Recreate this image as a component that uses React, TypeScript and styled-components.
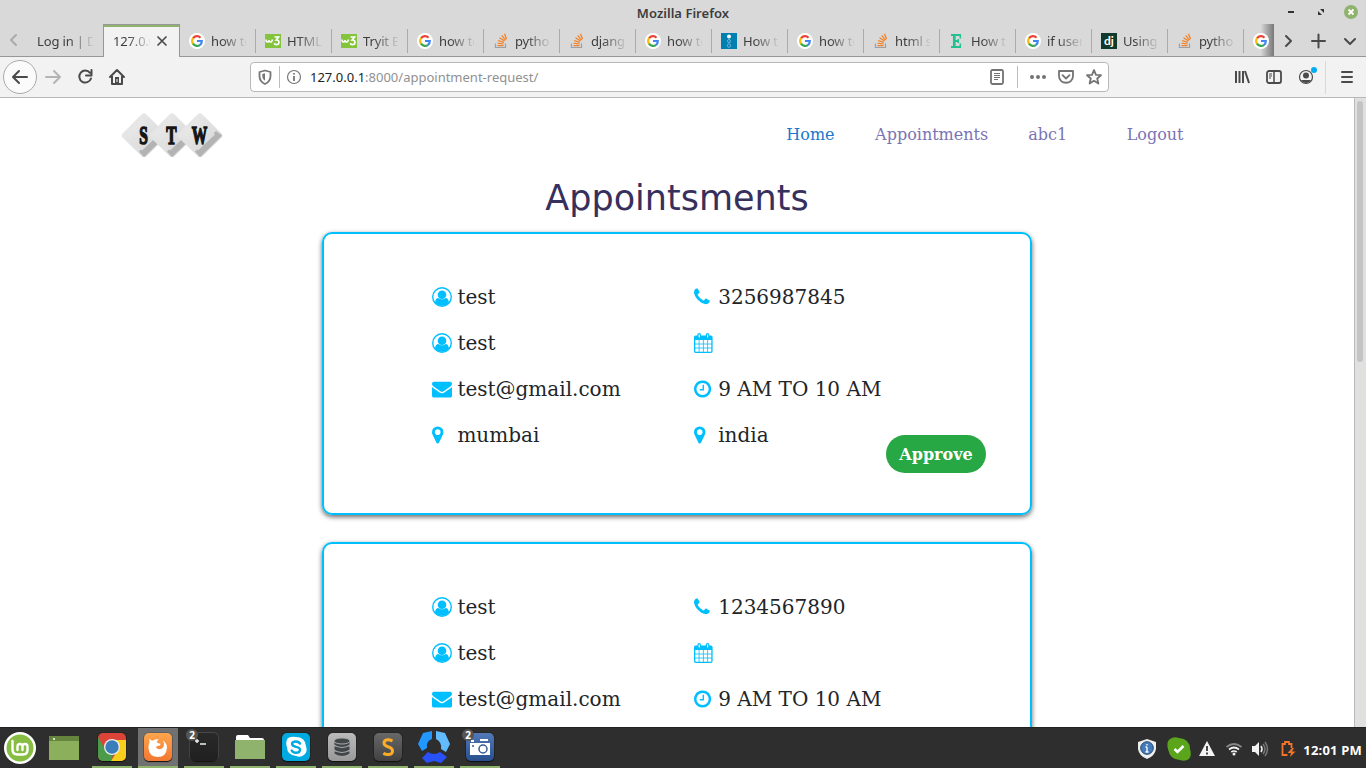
import React from "react";
import styled, { createGlobalStyle } from "styled-components";

const Global = createGlobalStyle`
  * { box-sizing: border-box; }
  body { margin: 0; background: #fff; overflow: hidden; }
  svg { display: block; flex: none; overflow: visible; }
`;
const Screen = styled.div`
  width: 1366px; height: 768px; display: flex; flex-direction: column; overflow: hidden;
  font-family: "Noto Sans", "Open Sans", sans-serif; font-size: 13px; color: #3d3d3d;
`;
const TitleBar = styled.header`
  height: 24px; flex: none; background: #d9d9d9; display: grid; grid-template-columns: 1fr auto 1fr; align-items: center;
  padding: 2px 8px 0 8px;
`;
const WindowTitle = styled.div`
  font-weight: 600; font-size: 13px; letter-spacing: 0.03px; line-height: 22px;
`;
const WindowButtons = styled.div`
  display: flex; justify-content: flex-end; align-items: center; height: 20px;
`;
const TabStrip = styled.nav`
  height: 33px; flex: none; display: flex; background: #d9d9d9; box-shadow: inset 0 -1px #979797;
`;
const ScrollTabs = styled.div`
  width: 27px; padding: 8px 0 0 6px; flex: none;
`;
const Tab = styled.div<{ $width?: number; $active?: boolean; $plain?: boolean }>`
  width: ${p => p.$width ?? 76}px; height: 33px; flex: none; display: flex; align-items: center; overflow: hidden;
  padding: ${p => (p.$plain ? "1px 8px 0 10px" : p.$active ? "0 9px" : "1px 7px 0 9px")};
  gap: ${p => (p.$active ? 4 : 6)}px;
  ${p => p.$active && "background:#f2f2f2; border:1px solid #979797; border-bottom:0; box-shadow: inset 0 2px #8fb26c;"}
`;
const TabRule = styled.i`
  width: 1px; height: 24px; flex: none; background: #aaa; margin: 5px 0 0 -1px;
`;
const TabText = styled.span<{ $width: number }>`
  width: ${p => p.$width}px; overflow: hidden; white-space: nowrap; letter-spacing: -0.15px; line-height: 20px;
  mask-image: linear-gradient(to right, #000 ${p => p.$width - 24}px, transparent ${p => p.$width + 2}px);
`;
const LastTab = styled.div`
  width: 30px; height: 32px; padding: 9px 0 0 9px; flex: none; overflow: hidden;
  background: linear-gradient(to right, transparent 55%, #777);
`;
const TabTools = styled.div`
  display: flex; flex: 1; padding: 5px 8px 0 6px; justify-content: space-between; height: 28px; align-items: center;
`;
const Toolbar = styled.div`
  height: 41px; flex: none; display: flex; align-items: center; background: #f2f2f2; border-bottom: 1px solid #b8b8b8; padding: 0 11px 0 3px;
`;
const BackButton = styled.div`
  width: 34px; height: 34px; border: 1px solid #aaa; border-radius: 50%; background: #fbfbfb; display: grid; place-items: center;
`;
const NavIcons = styled.div`
  display: flex; gap: 16px; margin-left: 8px; width: 205px;
`;
const AddressBar = styled.div`
  width: 859px; height: 30px; border: 1px solid #b8b8b8; border-radius: 4px; background: #fff; display: flex; align-items: center; padding: 0 6px;
`;
const Rule = styled.i<{ $h?: number; $gap?: number; $soft?: boolean }>`
  width: 1px; height: ${p => p.$h ?? 22}px; margin-left: ${p => p.$gap ?? 0}px; background: ${p => (p.$soft ? "#d8d8d8" : "#bdbdbd")}; flex: none;
`;
const Url = styled.div`
  flex: 1; margin-left: 8px; letter-spacing: 0; color: #919191; line-height: 20px; white-space: nowrap;
  b { font-weight: 400; color: #222; }
`;
const AddressActions = styled.div`
  display: flex; align-items: center; gap: 12px;
`;
const RightTools = styled.div`
  flex: 1; display: flex; align-items: center; justify-content: flex-end; gap: 16px;
`;
const MenuGroup = styled.div`
  display: flex; align-items: center; gap: 13px; margin-left: -5px;
`;
const Viewport = styled.div`
  flex: 1; min-height: 0; display: flex; background: #fff;
`;
const Page = styled.main`
  width: 1354px; height: 629px; overflow: hidden; font-family: "DejaVu Serif", serif; color: #212529;
`;
const ScrollTrack = styled.div`
  width: 12px; border-left: 1px solid #b9b9b9; background: #e0e0de; padding: 3px 2px;
`;
const ScrollThumb = styled.div`
  width: 6px; height: 261px; border-radius: 3px; background: #c3c5c4;
`;
const SiteHeader = styled.header`
  height: 73px; padding: 15px 170.5px 0 122px; display: flex; justify-content: space-between;
`;
const SiteNav = styled.nav`
  display: flex; font-size: 16px; line-height: 24px; padding-top: 10px; color: #7a74b4;
`;
const NavLink = styled.span<{ $current?: boolean; $gap?: number }>`
  margin-left: ${p => p.$gap ?? 40}px; ${p => p.$current && "color:#1977cc;"}
`;
const Heading = styled.h1`
  margin: 0; height: 61px; padding-top: 6px; font: 400 35px/43px "DejaVu Sans", sans-serif; text-align: center; color: #37305c;
`;
const Card = styled.section`
  width: 710px; height: 283px; margin: 0 auto 27px; border: 2px solid #00bfff; border-radius: 10px; box-shadow: 0 2px 5px rgba(0,0,0,.6);
  padding: 40px 43px 39px 108px; display: grid; grid-template-columns: 262px 192px 101px;
`;
const Column = styled.div`
  display: flex; flex-direction: column;
`;
const Detail = styled.div`
  height: 46px; display: flex; align-items: center; font-size: 20px; white-space: nowrap;
`;
const IconSlot = styled.span<{ $width: number }>`
  width: ${p => p.$width}px; flex: none; color: #00bfff;
`;
const Approve = styled.button`
  align-self: end; height: 38px; width: 100px; margin: 0 0 1px 0; padding: 1px 0 0; border: 0; border-radius: 19px; background: #28a745; color: #fff;
  font: 700 16px/24px "DejaVu Serif", serif;
`;
const Taskbar = styled.footer`
  height: 41px; flex: none; background: #2e2e2e; border-top: 1px solid #222; display: flex;
`;
const Launcher = styled.div<{ $open?: boolean; $active?: boolean; $width?: number; $gap?: number }>`
  width: ${p => p.$width ?? 40}px; height: 40px; margin-right: ${p => p.$gap ?? 6}px; flex: none; display: grid; place-items: center; position: relative;
  ${p => p.$active && "background:#717171;"}
  ${p => p.$open && "border-bottom:2px solid #8fb26c;"}
`;
const AppTile = styled.div<{ $bg: string; $edge?: string }>`
  width: 28px; height: 28px; border-radius: 5px; background: ${p => p.$bg}; overflow: hidden; box-shadow: 0 1px 1px #111, 0 0 0 1px ${p => p.$edge ?? "#0002"};
`;
const Count = styled.b`
  position: absolute; left: 2px; top: 1px; width: 12px; height: 12px; border-radius: 50%; background: #555; color: #fff; font-size: 10px; line-height: 12px; text-align: center;
`;
const Tray = styled.div`
  margin-left: auto; display: flex; align-items: center; padding: 1px 4px 0 0;
`;
const TrayItem = styled.div<{ $gap: number }>`
  margin-right: ${p => p.$gap}px;
`;
const Clock = styled.time`
  color: #fff; font-size: 13px; font-weight: 700; letter-spacing: .2px; white-space: nowrap; padding-top: 2px;
`;

type StrokeProps = { d: string; w?: number; c?: string; s?: number };
const Stroke = ({ d, w = 2, c = "#4a4a4a", s = 16 }: StrokeProps) => (
  <svg width={s} height={s} viewBox="0 0 16 16" fill="none" stroke={c} strokeWidth={w} strokeLinecap="round" strokeLinejoin="round"><path d={d} /></svg>
);

const Google = () => (
  <svg width="16" height="16" viewBox="0 0 16 16"><circle cx="8" cy="8" r="8" fill="#fff" />
    <g fill="none" strokeWidth="2.2"><path d="M4 5.3A4.8 4.8 0 0 1 11.5 4.7" stroke="#ea4335" /><path d="M4.1 5.2a4.8 4.8 0 0 0 0 5.6" stroke="#fbbc05" /><path d="M4 10.7a4.8 4.8 0 0 0 7.1 1.1" stroke="#34a853" /><path d="M8 8h4.8a4.8 4.8 0 0 1-1.8 3.9" stroke="#4285f4" /></g></svg>
);
const Overflow = () => (
  <svg width="16" height="16" viewBox="0 0 16 16" fill="none"><path d="M2.5 10.5v4h10v-4" stroke="#9aa0a8" strokeWidth="1.2" /><path d="M4.5 12.5h6M4.6 10.2l6 .8M5.1 7.5l5.8 1.9M6.5 4.7l5.1 3.4M8.7 2.4l3.9 4.7M11.5.7l2.1 5.5" stroke="#f48024" strokeWidth="1.25" /></svg>
);
const W3 = () => (
  <svg width="16" height="14" viewBox="0 0 16 14"><path fill="#84c43c" d="M0 0h16v14H0z" /><path d="M1 5.5q0 2.500 1.500 2.500T4 6q0 2 1.500 2T7.500 5.500" fill="none" stroke="#fff" strokeWidth="1.500" /><path d="M9.500 3h4L11.200 6c3.800-.3 3.500 4.700.1 4.700-1.100 0-1.800-.5-2-1.500" fill="none" stroke="#fff" strokeWidth="1.700" /></svg>
);
const Ocean = () => (
  <svg width="16" height="16"><path fill="#007fb1" d="M0 0h16v16H0z" /><circle cx="8" cy="3.5" r="2" fill="#fff" /><g fill="none" stroke="#6fb5d2"><circle cx="8" cy="8" r="1.5" /><circle cx="8" cy="12.5" r="1.7" /></g></svg>
);
const LetterE = () => (
  <svg width="16" height="16" viewBox="0 0 16 16" fill="none" stroke="#23c092"><path d="M2 2h10M2 14h10M5 8h4.500" strokeWidth="2" /><path d="M5.300 2v12" strokeWidth="2.700" /><path d="M11.300 2v3.500M11.300 14v-3.500M9.300 6v4" strokeWidth="1.500" /></svg>
);
const Django = () => <svg width="16" height="16"><path fill="#103a2c" d="M0 0h16v16H0z" /><text x="3" y="12" fontFamily="Lato" fontWeight="700" fontSize="12" fill="#fff">dj</text></svg>;

const tabs: [React.FC, string][] = [[Google, "how to"], [W3, "HTML s"], [W3, "Tryit E"], [Google, "how to"], [Overflow, "python"], [Overflow, "django"], [Google, "how to"], [Ocean, "How to"], [Google, "how to"], [Overflow, "html se"], [LetterE, "How to"], [Google, "if user"], [Django, "Using"], [Overflow, "python"]];

const Logo = () => (
  <svg width="102" height="46" viewBox="0 0 102 46">
    <defs><linearGradient id="face" x2="1" y2="1"><stop stopColor="#c4c4c4" /><stop offset=".25" stopColor="#e6e6e6" /><stop offset=".7" stopColor="#ddd" /><stop offset="1" stopColor="#a5a5a5" /></linearGradient>
      <linearGradient id="top" x2="1" y2="1"><stop stopColor="#ededed" /><stop offset="1" stopColor="#d6d6d6" /></linearGradient></defs>
    {[[22, "S"], [50, "T"], [78, "W"]].map(([x, l]) => (
      <g key={l} transform={`translate(${x} 22.5)`}>
        <path d="M-2-21.500Q0-23 2-21.500L21.500-2Q23 0 21.500 2L2 21Q0 22-2 21L-21.500 2Q-23 0-21.500-2z" fill="url(#face)" />
        <path d="M0 21.500-5 16 16-4.500 22 0z" fill="#b3b3b3" /><path d="M-2-17 15-1-2 15-17-1z" fill="url(#top)" />
        <text transform="translate(-.5 8) scale(.62 1)" textAnchor="middle" fontFamily="Liberation Serif" fontWeight="700" fontSize="25" fill="#151515" stroke="#151515" strokeWidth="1.5">{l}</text>
      </g>
    ))}
  </svg>
);

const glyphs: Record<string, string> = {
  phone: "M1600 1240q0 27-10 70.5t-21 68.5q-21 50-122 106-94 51-186 51-27 0-53-3.5t-57.5-12.5-47-14.5-55.5-20.5-49-18q-98-35-175-83-127-79-264-216t-216-264q-48-77-83-175-3-9-18-49t-20.5-55.5-14.5-47-12.5-57.5-3.5-53q0-92 51-186 56-101 106-122 25-11 68.5-21t70.5-10q14 0 21 3 18 6 53 76 11 19 30 54t35 63.5 31 53.5q3 4 17.5 25t21.5 35.5 7 28.5q0 20-28.5 50t-62 55-62 53-28.5 46q0 9 5 22.5t8.5 20.5 14 24 11.5 19q76 137 174 235t235 174q2 1 19 11.5t24 14 20.5 8.5 22.5 5q18 0 46-28.5t53-62 55-62 50-28.5q14 0 28.5 7t35.5 21.5 25 17.5q25 15 53.5 31t63.5 35 54 30q70 35 76 53 3 7 3 21z",
  mail: "M1792 710v794q0 66-47 113t-113 47h-1472q-66 0-113-47t-47-113v-794q44 49 101 87 362 246 497 345 57 42 92.5 65.5t94.5 48 110 24.5h2q51 0 110-24.5t94.5-48 92.5-65.5q170-123 498-345 57-39 100-87zm0-294q0 79-49 151t-122 123q-376 261-468 325-10 7-42.5 31t-54 38.5-52 32.5-57.5 27-50 9h-2q-23 0-50-9t-57.5-27-52-32.5-54-38.5-42.5-31q-91-64-262-182.5t-205-142.5q-62-42-117-115.5t-55-136.5q0-78 41.5-130t118.5-52h1472q65 0 112.5 47t47.5 113z",
  pin: "M1152 640q0-106-75-181t-181-75-181 75-75 181 75 181 181 75 181-75 75-181zm256 0q0 109-33 179l-364 774q-16 33-47.5 52t-67.5 19-67.5-19-46.5-52l-365-774q-33-70-33-179 0-212 150-362t362-150 362 150 150 362z",
  clock: "M1024 544v448q0 14-9 23t-23 9h-320q-14 0-23-9t-9-23v-64q0-14 9-23t23-9h224v-352q0-14 9-23t23-9h64q14 0 23 9t9 23zm416 352q0-148-73-273t-198-198-273-73-273 73-198 198-73 273 73 273 198 198 273 73 273-73 198-198 73-273zm224 0q0 209-103 385.5t-279.5 279.5-385.5 103-385.5-103-279.5-279.5-103-385.5 103-385.5 279.5-279.5 385.5-103 385.5 103 279.5 279.5 103 385.5z",
};
const originX: Record<string, number> = { phone: 192, mail: 0, pin: 384, clock: 128 };
const Glyph = ({ name }: { name: string }) => {
  if (name === "user") return (
    <svg width="20" height="20" viewBox="0 0 20 20"><circle cx="10" cy="10" r="9.3" fill="none" stroke="currentColor" strokeWidth="1.4" /><circle cx="10" cy="7.7" r="4.3" fill="currentColor" /><path d="M3 15.4c.3-2.7 1.4-4.5 3.4-4.5 2 1.8 5.2 1.8 7.2 0 2 0 3.1 1.8 3.4 4.5C13.5 19.8 6.5 19.8 3 15.4z" fill="currentColor" /></svg>
  );
  if (name === "calendar") return (
    <svg width="19" height="20" viewBox="0 0 19 20" fill="none" stroke="currentColor"><rect x=".65" y="3.2" width="17.3" height="16.1" rx="1" strokeWidth="1.3" /><path d="M1 3h17v4H1z" fill="currentColor" stroke="none" /><path d="M1 11h17M1 15h17M5.1 7v12M9.4 7v12M13.6 7v12" strokeWidth=".8" /><rect x="4" y=".6" width="2.4" height="4.4" rx="1.1" fill="#fff" strokeWidth="1.2" /><rect x="12.4" y=".6" width="2.4" height="4.4" rx="1.1" fill="#fff" strokeWidth="1.2" /></svg>
  );
  return <svg width="20" height="20" viewBox={`${originX[name]} 0 1792 1792`} fill="currentColor"><path d={glyphs[name]} /></svg>;
};

const Appointment = ({ phone, city, country }: { phone: string; city?: string; country?: string }) => {
  const person = [["user", "test"], ["user", "test"], ["mail", "test@gmail.com"]];
  const booking = [["phone", phone], ["calendar", ""], ["clock", "9 AM TO 10 AM"]];
  if (city) person.push(["pin", city]);
  if (country) booking.push(["pin", country]);
  return (
    <Card>
      <Column>{person.map(([icon, text], i) => <Detail key={i}><IconSlot $width={25.4}><Glyph name={icon} /></IconSlot>{text}</Detail>)}</Column>
      <Column>{booking.map(([icon, text]) => <Detail key={icon}><IconSlot $width={24.2}><Glyph name={icon} /></IconSlot>{text}</Detail>)}</Column>
      {city && <Approve>Approve</Approve>}
    </Card>
  );
};

const BrowserTabs = () => (
  <TabStrip>
    <ScrollTabs><Stroke d="M10 3 5 8l5 5" c="#aaa" /></ScrollTabs>
    <Tab $plain><TabText $width={56}>Log in | Dj</TabText></Tab>
    <Tab $active $width={77}><TabText $width={38}>127.0.0</TabText><Stroke d="m4 4 8 8m0-8-8 8" w={1.7} /></Tab>
    {tabs.map(([Icon, label], i) => (
      <React.Fragment key={i}><Tab><Icon /><TabText $width={35}>{label}</TabText></Tab><TabRule /></React.Fragment>
    ))}
    <LastTab><Google /></LastTab>
    <TabTools><Stroke d="m6 3 5 5-5 5" /><Stroke d="M7.500 1.500v13M1 8h13" /><Stroke d="m3 6 5 5 5-5" /></TabTools>
  </TabStrip>
);

const BrowserToolbar = () => (
  <Toolbar>
    <BackButton><Stroke d="M15 8H1m6-6L1 8l6 6" /></BackButton>
    <NavIcons>
      <Stroke d="M1 8h14M9 2l6 6-6 6" c="#b4b4b4" />
      <Stroke d="M13 3.8A6 6 0 1 0 14 9.5M14.5 1v5.5H9" />
      <svg width="16" height="16" viewBox="0 0 16 16"><path d="m1 8 7-7 7 7M3 7v8h10V7" fill="none" stroke="#4a4a4a" strokeWidth="2" strokeLinecap="round" strokeLinejoin="round" /><path d="M6 8h4v7H6z" fill="#4a4a4a" /><path d="M8 10v3" stroke="#fff" /></svg>
    </NavIcons>
    <AddressBar>
      <svg width="16" height="16" viewBox="0 0 16 16"><path d="M8 1.5 13.5 3v4c0 4-2 6.5-5.500 8-3.500-1.500-5.500-4-5.500-8V3z" fill="none" stroke="#777" strokeWidth="1.8" strokeLinejoin="round" /><path d="M8 4.300v7.500c-1.800-1.200-2.700-2.800-2.700-5V5z" fill="#777" /></svg>
      <Rule $gap={6} />
      <svg width="22" height="16" viewBox="-7 0 22 16"><circle cx="7" cy="8" r="6.500" fill="none" stroke="#777" strokeWidth="1.200" /><path d="M7 7v5M7 4v1.500" stroke="#777" strokeWidth="1.800" /></svg>
      <Url><b>127.0.0.1</b>:8000/appointment-request/</Url>
      <AddressActions>
        <svg width="16" height="16" viewBox="0 0 16 16" fill="none" stroke="#737373"><rect x="2" y="1" width="12" height="14" rx="1.500" strokeWidth="1.800" /><path d="M5 4.500h6M5 6.500h6M5 8.500h6M5 10.500h4" /></svg>
        <Rule />
        <svg width="16" height="16" viewBox="0 0 16 16" fill="#737373"><circle cx="2" cy="8" r="2" /><circle cx="8" cy="8" r="2" /><circle cx="14" cy="8" r="2" /></svg>
        <Stroke d="M1 2h14v5c0 9-14 9-14 0zM4.500 6.200 8 9.500l3.500-3.300" c="#737373" w={1.8} />
        <Stroke d="m8 1 2 4.800 5 .4-3.800 3.300 1.200 5L8 11.800l-4.400 2.700 1.200-5L1 6.200l5-.4z" c="#737373" w={1.8} />
      </AddressActions>
    </AddressBar>
    <RightTools>
      <svg width="16" height="16" viewBox="0 0 16 16"><path d="M2 2v12M5.500 2v12M9 2v12M11 2l4 12" stroke="#4a4a4a" strokeWidth="2" /></svg>
      <svg width="16" height="16" viewBox="0 0 16 16" fill="none" stroke="#4a4a4a"><rect x="1" y="2" width="14" height="12" rx="2" strokeWidth="1.800" /><path d="M8 2v12" strokeWidth="1.500" /><path d="M3 5h3M3 7h3M3 9h2" /></svg>
      <svg width="16" height="16" viewBox="0 0 16 16"><circle cx="8" cy="8" r="6.500" fill="none" stroke="#4a4a4a" strokeWidth="1.200" /><circle cx="8" cy="6.500" r="3" fill="#4a4a4a" /><path d="M3 11h10c-2 4-8 4-10 0z" fill="#4a4a4a" /><circle cx="16" cy="1" r="3" fill="#00adf5" /></svg>
      <MenuGroup><Rule $h={33} $soft /><Stroke d="M3 3h10M3 8h10M3 13h10" /></MenuGroup>
    </RightTools>
  </Toolbar>
);

const DesktopBar = () => (
  <Taskbar>
    <Launcher $gap={4}><svg width="32" height="32" viewBox="0 0 32 32"><circle cx="16" cy="16" r="16" fill="#fff" /><circle cx="16" cy="16" r="13.500" fill="#87bd43" /><path d="M8.500 9v8.500q0 5 5 5H19q4.500 0 4.500-4.500v-3.500Q23.500 12 21 12t-2.500 2.500V18M18.500 14.500Q18.500 12 16 12t-2.500 2.500V18" fill="none" stroke="#fff" strokeWidth="2.400" strokeLinecap="round" /></svg></Launcher>
    <Launcher $gap={8}><svg width="30" height="24"><path d="M0 0h30v24H0z" fill="#8baf5b" /><path d="M0 0h30v5H0z" fill="#65843e" /><circle cx="5" cy="3" r="1" fill="#fff" /></svg></Launcher>
    <Launcher $open><AppTile $bg="#db4437"><svg width="28" height="28" viewBox="0 0 28 28"><path fill="#4b9b4a" d="M0 4 8 18l7 4-2 6H0z" /><path fill="#f6ce1b" d="M14 7h14v21H13l7-11z" /><circle cx="14" cy="14" r="8" fill="#eee" /><circle cx="14" cy="14" r="6.700" fill="#397dbb" /></svg></AppTile></Launcher>
    <Launcher $open $active><AppTile $bg="linear-gradient(#ffa64d,#f17732)"><svg width="28" height="28" viewBox="0 0 28 28"><path fill="#fff" d="M5.500 5.500q1 2 3 2.200Q11 5.500 15 6.500q-3 1.500-1.500 3.500l3 .8q0 2.200-3 2.200-1.500.3-1.500 1.500 2.500 3 6 1 3.500-3 1-8 4 3 4 7-.5 9.500-9.500 9.500-8.500-.5-9-9 0-4 1-5.500z" /></svg></AppTile></Launcher>
    <Launcher $open><AppTile $bg="linear-gradient(#292929,#202020)" $edge="#484848"><svg width="28" height="28"><path d="M10 11h6M5 8h4M7 6v4" stroke="#eee" strokeWidth="1.500" /></svg></AppTile><Count>2</Count></Launcher>
    <Launcher $open><svg width="30" height="24" viewBox="0 0 30 24"><path d="M1 2q0-2 2-2h10l2 3h12q2 0 2 2v5H1z" fill="#fff" /><path d="M0 5h30v19H0z" fill="#8fb26c" /></svg></Launcher>
    <Launcher $open><AppTile $bg="#00a9df"><svg width="28" height="28" viewBox="0 0 28 28"><path fill="#fff" d="M6 5q4-2 8-1 9 0 10 9 2 6-2 9-4 3-8 1-9-1-9-9-2-5 1-9z" /><path d="M18 10.500Q16.500 8.500 14 8.500q-3.500 0-4 2.300 0 2.200 4 3.100 4.300.8 4 3.300-.5 2.600-4 2.600-3 0-4.300-2.300" fill="none" stroke="#00a9df" strokeWidth="2.400" strokeLinecap="round" /></svg></AppTile></Launcher>
    <Launcher $open><AppTile $bg="linear-gradient(#bbb,#999)"><svg width="28" height="28" viewBox="0 0 28 28" fill="#414749" stroke="#a8a8a8"><path d="M6 18v3q8 5 16 0v-3z" /><path d="M6 13v4q8 5 16 0v-4z" /><path d="M6 8v4q8 5 16 0V8z" /><ellipse cx="14" cy="8" rx="8" ry="3" /></svg></AppTile></Launcher>
    <Launcher $open><AppTile $bg="linear-gradient(#686868,#414141)"><svg width="28" height="28"><path d="M18.500 8Q16 6.700 14 6.700q-4 0-4 3.300 0 2.500 4 3.700 4.500 1.200 4.500 4.300 0 3.500-4.500 3.500-2.500 0-4.700-1.300" stroke="#ffac26" strokeWidth="3" fill="none" /></svg></AppTile></Launcher>
    <Launcher $open><svg width="32" height="32" viewBox="0 0 32 32"><path fill="#2198ff" d="m5 2 9-2v8q-6 2-5 9l-5 3-4-7z" /><path fill="#62baff" d="m18 0 9 2 5 11-4 8-5-3q1-7-5-10z" /><path fill="#2851fa" d="m4 27 6-6q6 4 12 0l7 5-6 6-7-2-7 2z" /></svg></Launcher>
    <Launcher $open><AppTile $bg="linear-gradient(#527ab8,#294f8e)"><svg width="28" height="28"><path fill="#fff" d="M4 10h20v12H4zM14 6h8v2h-8zM5 7h3v2H5z" /><circle cx="17" cy="16" r="4" fill="#fff" stroke="#355b99" strokeWidth="1.500" /><circle cx="7" cy="13" r="1" fill="#355b99" /></svg></AppTile><Count>2</Count></Launcher>
    <Tray>
      <TrayItem $gap={11}><svg width="18" height="20" viewBox="0 0 18 20"><path d="m9 0 9 3v7q-1 7-9 10-8-3-9-10V3z" fill="#eee" /><circle cx="9" cy="9" r="6.300" fill="#447bbb" stroke="#28476a" /><path d="M9 8v5M7.500 8H9M7.500 13h3M9 5v1.500" stroke="#fff" strokeWidth="1.300" /></svg></TrayItem>
      <TrayItem $gap={8}><svg width="24" height="24" viewBox="0 0 24 24"><path fill="#5aa51b" d="M3 2q4-3 9-1 11 1 11 11 2 6-1 10-4 3-9 1Q3 23 1 12-1 5 3 2z" /><path d="m7.500 12 3 3 6-6" fill="none" stroke="#fff" strokeWidth="2.500" /></svg></TrayItem>
      <TrayItem $gap={11}><svg width="16" height="16" viewBox="0 0 16 16"><path fill="#f3f3f3" d="M8 0 16 15H0z" /><path d="M8 5v5M8 11.500v2" stroke="#333" strokeWidth="1.800" /></svg></TrayItem>
      <TrayItem $gap={10}><svg width="16" height="16" viewBox="0 0 16 16" fill="none" strokeWidth="1.700"><path d="M.5 6q7.500-6 15 0" stroke="#888" /><path d="M3 8.500q5-4 10 0M5.300 11q2.700-2 5.400 0" stroke="#f3f3f3" /><circle cx="8" cy="13" r="1.500" fill="#f3f3f3" /></svg></TrayItem>
      <TrayItem $gap={12}><svg width="16" height="16" viewBox="0 0 16 16" fill="none"><path fill="#f3f3f3" d="M0 5h3l4-4v14l-4-4H0z" /><path d="M9 5q2 3 0 6" stroke="#eee" strokeWidth="1.600" /><path d="M11 3q4 5 0 10M13 1q5 7 0 14" stroke="#777" strokeWidth="1.500" /></svg></TrayItem>
      <TrayItem $gap={7}><svg width="16" height="16" viewBox="0 0 16 16"><path d="M7.500 14H2.500V3H5V1h4v2h2.500v4" fill="none" stroke="#f37329" strokeWidth="1.800" /><path fill="#f37329" d="m12 7-4.500 5H11l-1 4 5.500-5.500H12l2-3.500z" /></svg></TrayItem>
      <Clock>12:01 PM</Clock>
    </Tray>
  </Taskbar>
);

export default function App() {
  return (
    <><Global /><Screen>
      <TitleBar><span /><WindowTitle>Mozilla Firefox</WindowTitle><WindowButtons>
        <svg width="78" height="16" viewBox="0 0 78 16"><path d="M8 7h6" stroke="#333" strokeWidth="2" /><path d="M40 4h4v4zM38 6v4h4z" fill="#333" /><circle cx="71" cy="7" r="7" fill="#8fb26c" /><path d="m68.500 4.500 5 5m0-5-5 5" stroke="#fff" strokeWidth="1.800" /></svg>
      </WindowButtons></TitleBar>
      <BrowserTabs />
      <BrowserToolbar />
      <Viewport>
        <Page>
          <SiteHeader><Logo /><SiteNav><NavLink $current>Home</NavLink><NavLink $gap={40.500}>Appointments</NavLink><NavLink>abc1</NavLink><NavLink $gap={59.500}>Logout</NavLink></SiteNav></SiteHeader>
          <Heading>Appointsments</Heading>
          <Appointment phone="3256987845" city="mumbai" country="india" />
          <Appointment phone="1234567890" />
        </Page>
        <ScrollTrack><ScrollThumb /></ScrollTrack>
      </Viewport>
      <DesktopBar />
    </Screen></>
  );
}
